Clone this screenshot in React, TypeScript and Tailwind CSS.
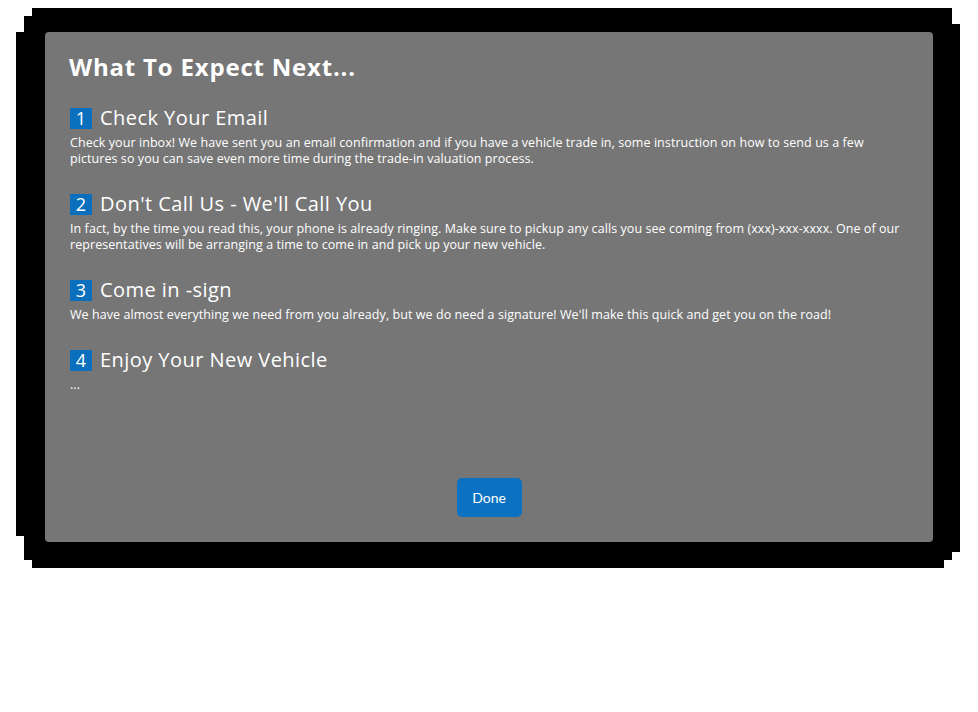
const steps = [
  {
    title: "Check Your Email",
    body: "Check your inbox! We have sent you an email confirmation and if you have a vehicle trade in, some instruction on how to send us a few pictures so you can save even more time during the trade-in valuation process.",
  },
  {
    title: "Don't Call Us - We'll Call You",
    body: "In fact, by the time you read this, your phone is already ringing. Make sure to pickup any calls you see coming from (xxx)-xxx-xxxx. One of our representatives will be arranging a time to come in and pick up your new vehicle.",
  },
  {
    title: "Come in -sign",
    body: "We have almost everything we need from you already, but we do need a signature! We'll make this quick and get you on the road!",
  },
  {
    title: "Enjoy Your New Vehicle",
    body: "...",
  },
];

export default function App() {
  return (
    <div className="min-h-[712px] w-full bg-white pt-2 pl-4">
      {/* blocky black backdrop */}
      <div className="w-[944px] h-[560px] bg-black pl-[29px] pt-6 [clip-path:polygon(16px_0,936px_0,936px_16px,944px_16px,944px_544px,936px_544px,936px_552px,928px_552px,928px_560px,16px_560px,16px_552px,8px_552px,8px_528px,0_528px,0_24px,8px_24px,8px_8px,16px_8px)]">
        <div className="flex flex-col w-[888px] h-[510px] rounded bg-[#767676] px-6 pt-[19px] pb-[25px] text-white font-['Open_Sans',sans-serif]">
          <h1 className="text-[24px] leading-[32px] font-bold tracking-[0.8px]">
            What To Expect Next...
          </h1>
          <div className="flex flex-col gap-[23px] mt-[21px]">
            {steps.map((step, index) => (
              <section key={index} className="flex flex-col">
                <header className="flex items-center gap-2 h-7 pl-px">
                  <span className="flex items-center justify-center w-[22px] h-[21px] bg-[#0a6fbd] text-[18px] leading-none">
                    {index + 1}
                  </span>
                  <span className="text-[20px] leading-7 tracking-[0.45px]">
                    {step.title}
                  </span>
                </header>
                <p className="mt-[3px] pl-px text-[12.5px] leading-[16px] tracking-[0.07px]">
                  {step.body}
                </p>
              </section>
            ))}
          </div>
          <div className="mt-auto flex justify-center">
            <button className="w-[65px] h-[39px] rounded-[5px] bg-[#0a72c0] text-[14px] text-white font-['Lato',sans-serif]">
              Done
            </button>
          </div>
        </div>
      </div>
    </div>
  );
}
